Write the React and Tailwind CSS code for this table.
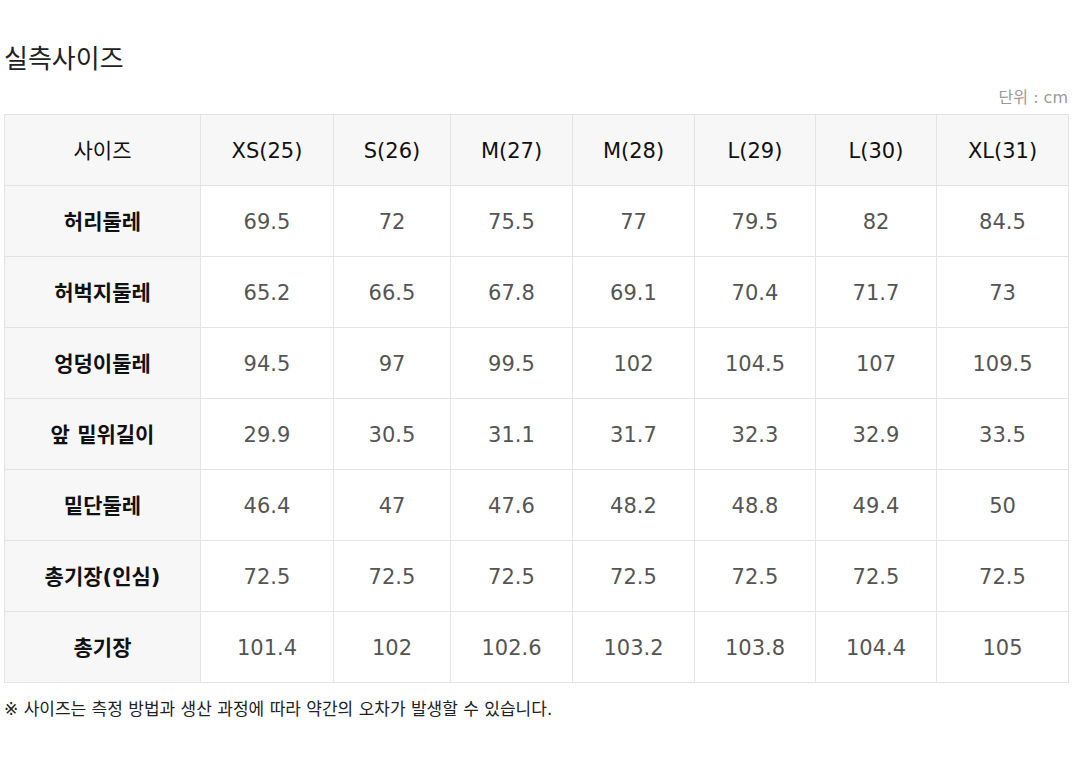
import React from 'react';

// Size chart data
const sizes = ['XS(25)', 'S(26)', 'M(27)', 'M(28)', 'L(29)', 'L(30)', 'XL(31)'];

const rows = [
  { name: '허리둘레', values: ['69.5', '72', '75.5', '77', '79.5', '82', '84.5'] },
  { name: '허벅지둘레', values: ['65.2', '66.5', '67.8', '69.1', '70.4', '71.7', '73'] },
  { name: '엉덩이둘레', values: ['94.5', '97', '99.5', '102', '104.5', '107', '109.5'] },
  { name: '앞 밑위길이', values: ['29.9', '30.5', '31.1', '31.7', '32.3', '32.9', '33.5'] },
  { name: '밑단둘레', values: ['46.4', '47', '47.6', '48.2', '48.8', '49.4', '50'] },
  { name: '총기장(인심)', values: ['72.5', '72.5', '72.5', '72.5', '72.5', '72.5', '72.5'] },
  { name: '총기장', values: ['101.4', '102', '102.6', '103.2', '103.8', '104.4', '105'] },
];

const colWidths = ['w-[196px]', 'w-[133px]', 'w-[117px]', 'w-[122px]', 'w-[122px]', 'w-[121px]', 'w-[121px]', 'w-[132px]'];

const App = () => {
  return (
    <div className="w-[1072px] h-[762px] bg-white px-[4px] pt-[44px] font-['DejaVu_Sans','Noto_Sans_CJK_KR',sans-serif]">
      {/* Title */}
      <h2 className="text-[26px] leading-[30px] text-[#222] font-normal">실측사이즈</h2>

      {/* Unit */}
      <div className="mt-[14px] text-right text-[16px] leading-[20px] text-[#999]">단위 : cm</div>

      {/* Table */}
      <table className="mt-[6px] w-[1064px] table-fixed border-collapse border border-[#e3e3e3]">
        <colgroup>
          {colWidths.map((w, i) => (
            <col key={i} className={w} />
          ))}
        </colgroup>
        <thead>
          <tr className="h-[71px] bg-[#f7f7f7]">
            <th className="border border-[#e3e3e3] pt-[3px] text-[21px] font-normal text-[#111]">사이즈</th>
            {sizes.map((s) => (
              <th key={s} className="border border-[#e3e3e3] pt-[3px] text-[21px] font-normal text-[#111]">{s}</th>
            ))}
          </tr>
        </thead>
        <tbody>
          {rows.map((row) => (
            <tr key={row.name} className="h-[71px]">
              <th className="border border-[#e3e3e3] bg-[#f7f7f7] pt-[3px] text-[21px] font-bold text-[#111]">{row.name}</th>
              {row.values.map((v, i) => (
                <td key={i} className="border border-[#e3e3e3] pt-[3px] text-center text-[21px] text-[#555]">{v}</td>
              ))}
            </tr>
          ))}
        </tbody>
      </table>

      {/* Footnote */}
      <p className="mt-[15px] text-[17px] leading-[22px] text-[#222]">※ 사이즈는 측정 방법과 생산 과정에 따라 약간의 오차가 발생할 수 있습니다.</p>
    </div>
  );
};

export default App;
